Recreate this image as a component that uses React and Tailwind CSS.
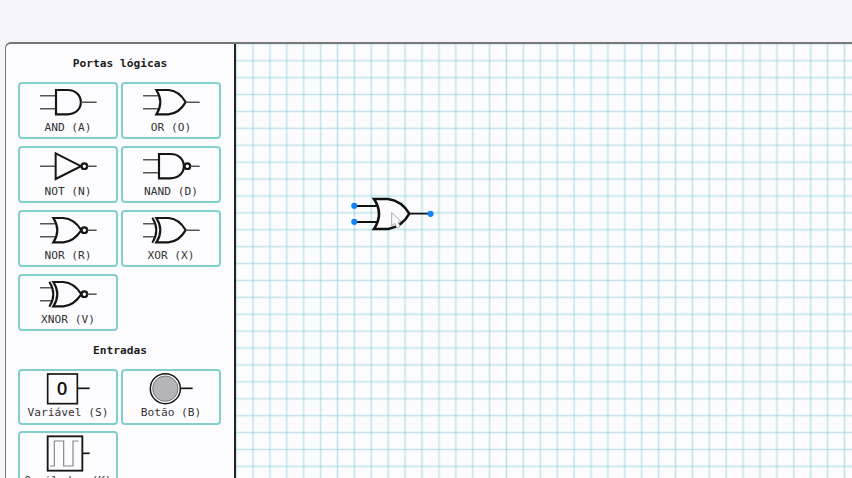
import React from "react";

const Leads = ({ x = 112 }) => <path d={`M66 41H${x}M66 80H${x}`} stroke="#555" strokeWidth="4.5" />;
const Out = ({ x }) => <path d={`M${x} 60.5H236`} stroke="#555" strokeWidth="4.5" />;
const Bubble = () => (
  <>
    <circle cx="199" cy="60.5" r="8.5" strokeWidth="6.5" />
    <Out x={208} />
  </>
);
const And = ({ neg }) => (
  <>
    <Leads />
    <path d="M114 24H148C202 24 202 97 148 97H114Z" strokeWidth="6.5" />
    {neg ? <Bubble /> : <Out x={189} />}
  </>
);
const Or = ({ neg, ex }) => (
  <>
    <Leads x={ex ? 104 : 117} />
    <path
      d={neg ? "M106 24H136Q168 26 190 60.5Q168 95 136 97H106Q130 60.5 106 24Z" : "M106 24H142Q174 26 194 60.5Q174 95 142 97H106Q130 60.5 106 24Z"}
      strokeWidth="6.5"
    />
    {ex && <path d="M94 23Q118 60.5 94 98" strokeWidth="6" />}
    {neg ? <Bubble /> : <Out x={194} />}
  </>
);
const Not = () => (
  <>
    <path d="M66 60.5H112" stroke="#555" strokeWidth="4.5" />
    <path d="M113 22L189 60.5L113 99Z" strokeWidth="6" />
    <Bubble />
  </>
);
const Variable = () => (
  <>
    <rect x="89" y="15" width="89" height="89" strokeWidth="5" />
    <path d="M178 58H215" strokeWidth="5" />
    <text x="132" y="79" textAnchor="middle" fontSize="56" fontWeight="600" fontFamily="Open Sans, sans-serif" fill="#111" stroke="none">0</text>
  </>
);
const Button = () => (
  <>
    <circle cx="133" cy="59" r="45" strokeWidth="4.5" />
    <circle cx="133" cy="59" r="38" fill="#b5b5b7" stroke="#77777b" strokeWidth="3" />
    <path d="M178 58H215" strokeWidth="5" />
  </>
);
const Clock = () => (
  <>
    <rect x="89" y="16" width="104" height="103" strokeWidth="5.5" />
    <path d="M193 67H215" strokeWidth="5" />
    <path d="M96 105H109V30H137V105H165V30H182" stroke="#85858b" strokeWidth="3.5" />
  </>
);

const gates = [
  ["AND (A)", <And />],
  ["OR (O)", <Or />],
  ["NOT (N)", <Not />],
  ["NAND (D)", <And neg />],
  ["NOR (R)", <Or neg />],
  ["XOR (X)", <Or ex />],
  ["XNOR (V)", <Or neg ex />],
];
const inputs = [
  ["Variável (S)", <Variable />],
  ["Botão (B)", <Button />],
  ["Oscilador (K)", <Clock />],
];

function Card({ label, art, input }) {
  const tall = label.startsWith("Osc");
  return (
    <button
      type="button"
      className={`flex flex-col items-center rounded-[4px] border-2 border-[#83cfce] bg-[#fcfcfe] ${input ? (tall ? "h-[62px]" : "h-[56px]") : "h-[57px]"}`}
    >
      <svg
        className={`-mt-[2px] w-[100px] shrink-0 ${input ? (tall ? "h-[42px]" : "h-[36px]") : "h-[37px]"}`}
        viewBox={`0 0 300 ${input ? (tall ? 126 : 108) : 111}`}
        fill="none"
        stroke="#151515"
      >
        {art}
      </svg>
      <span className={`whitespace-pre text-[11.2px] leading-[14px] text-[#333] ${input ? "mt-px" : "mt-[1.5px]"}`}>{label}</span>
    </button>
  );
}

export default function App() {
  return (
    <div className="flex h-[478px] w-[852px] flex-col overflow-hidden bg-[#f5f4fa] pl-[5px] pt-[42px] font-['DejaVu_Sans_Mono',monospace]">
      <main className="flex min-h-0 flex-1 overflow-hidden rounded-tl-[6px] border-l border-t-2 border-[#77777a] bg-[#fcfcfe]">
        <aside className="flex w-[230px] shrink-0 flex-col overflow-hidden border-r-2 border-[#222] pl-[12px]">
          <h2 className="mt-[12px] w-[204px] text-center text-[11.2px] font-bold leading-[16px] text-[#1c1c1c]">Portas lógicas</h2>
          <div className="mt-[10px] grid grid-cols-[100px_100px] gap-x-[3px] gap-y-[7px]">
            {gates.map(([l, a]) => <Card key={l} label={l} art={a} />)}
          </div>
          <h2 className="mt-[12px] w-[204px] text-center text-[11.2px] font-bold leading-[16px] text-[#1c1c1c]">Entradas</h2>
          <div className="mt-[10px] grid grid-cols-[100px_100px] gap-x-[3px] gap-y-[6px]">
            {inputs.map(([l, a]) => <Card key={l} label={l} art={a} input />)}
          </div>
        </aside>
        <section className="min-w-0 flex-1">
          <svg className="block h-[434px] w-[616px]" viewBox="236 44 616 434" fill="none">
            <defs>
              <pattern id="grid" x="244.55" y="52.3" width="16.9" height="16.9" patternUnits="userSpaceOnUse">
                <g stroke="#7ccbd6" strokeOpacity="0.45" strokeWidth="1.6">
                  <path d="M8.45 0V16.9" />
                  <path d="M0 8.45H16.9" />
                </g>
              </pattern>
            </defs>
            <rect x="236" y="44" width="616" height="434" fill="url(#grid)" />
            <path d="M354 206H377M354 222H377M409 213.7H431" stroke="#111" strokeWidth="1.8" />
            <path d="M374 199H388Q402 201 409.3 213.7Q402 227 388 229H374Q384 213.7 374 199Z" fill="#fcfcfe" stroke="#111" strokeWidth="2.6" />
            <g fill="#1483f5">
              <circle cx="354.3" cy="205.8" r="3.1" />
              <circle cx="354.3" cy="221.8" r="3.1" />
              <circle cx="430.5" cy="213.8" r="3.1" />
            </g>
            <path d="M391.7 212.5V226L394.8 223.3L397 228L400 226.5L398 222.3L401 221.5Z" fill="#fcfcfe" stroke="#aaa9aa" strokeWidth="1" />
          </svg>
        </section>
      </main>
    </div>
  );
}
